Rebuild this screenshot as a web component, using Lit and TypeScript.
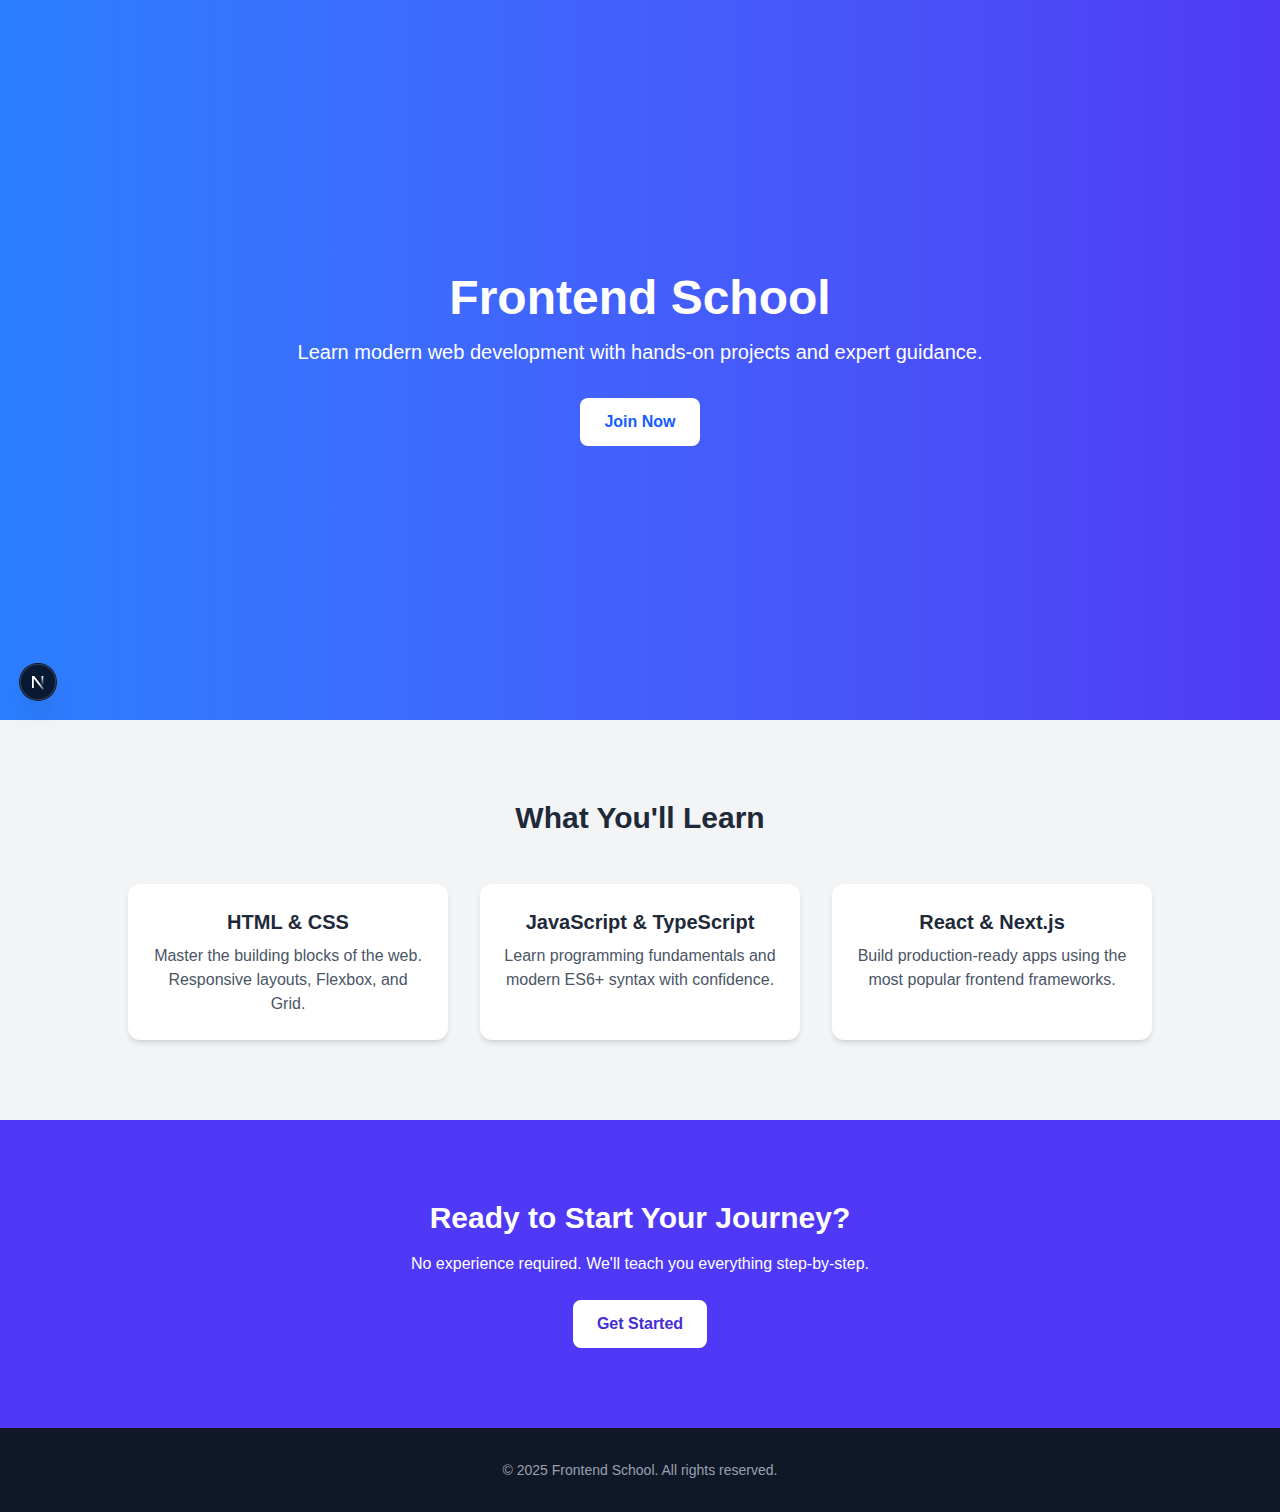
import { LitElement, html, css } from "lit";
import { customElement } from "lit/decorators.js";

interface Course {
  title: string;
  text: string;
}

const courses: Course[] = [
  {
    title: "HTML & CSS",
    text: "Master the building blocks of the web. Responsive layouts, Flexbox, and Grid.",
  },
  {
    title: "JavaScript & TypeScript",
    text: "Learn programming fundamentals and modern ES6+ syntax with confidence.",
  },
  {
    title: "React & Next.js",
    text: "Build production-ready apps using the most popular frontend frameworks.",
  },
];

@customElement("dev-tools-badge")
export class DevToolsBadge extends LitElement {
  static styles = css`
    :host {
      display: block;
    }
    .badge {
      display: flex;
      align-items: center;
      justify-content: center;
      width: 36px;
      height: 36px;
      padding: 0;
      border: 0;
      border-radius: 50%;
      background: rgba(0, 0, 0, 0.8);
      box-shadow:
        0 0 0 1px #171717,
        inset 0 0 0 1px hsla(0, 0%, 100%, 0.14),
        0 16px 32px -8px rgba(0, 0, 0, 0.24);
      backdrop-filter: blur(48px);
      cursor: pointer;
    }
    .mark {
      display: block;
      width: 40px;
      height: 40px;
      flex: none;
    }
  `;

  render() {
    return html`
      <button class="badge" aria-label="Open Next.js Dev Tools">
        <svg class="mark" width="40" height="40" viewBox="0 0 40 40" fill="none" aria-hidden="true">
          <defs>
            <linearGradient id="diagonal" x1="20.5" y1="22" x2="25.9" y2="28.7" gradientUnits="userSpaceOnUse">
              <stop stop-color="#fff" />
              <stop offset="1" stop-color="#fff" stop-opacity="0.15" />
            </linearGradient>
            <linearGradient id="stem" x1="24.3" y1="14" x2="24.3" y2="23.5" gradientUnits="userSpaceOnUse">
              <stop stop-color="#fff" />
              <stop offset="1" stop-color="#fff" stop-opacity="0" />
            </linearGradient>
          </defs>
          <path d="M14 14 H16.2 L26 26.7 L24.5 27.8 L15.8 16.6 V26 H14 Z" fill="url(#diagonal)" />
          <path d="M23.5 14 H25.3 V24 H23.5 Z" fill="url(#stem)" />
        </svg>
      </button>
    `;
  }
}

@customElement("app-root")
export class AppRoot extends LitElement {
  static styles = css`
    :host {
      display: block;
      background: #ffffff;
      font-family: "Liberation Sans", Arial, Helvetica, sans-serif;
      font-size: 16px;
      line-height: 24px;
      text-align: center;
    }
    h1,
    h2,
    h3,
    p {
      margin: 0;
    }
    .hero {
      position: relative;
      display: flex;
      flex-direction: column;
      align-items: center;
      justify-content: center;
      box-sizing: border-box;
      min-height: 720px;
      padding: 24px;
      color: #ffffff;
      background: linear-gradient(to right in oklab, #2b7fff, #4f39f6);
    }
    .hero-title {
      margin-bottom: 16px;
      font-size: 48px;
      line-height: 48px;
    }
    .hero-text {
      margin-bottom: 32px;
      font-size: 20px;
      line-height: 28px;
    }
    .button {
      display: inline-block;
      padding: 12px 24px;
      border-radius: 8px;
      background: #ffffff;
      font-weight: 600;
      text-decoration: none;
    }
    .button-blue {
      color: #155dfc;
    }
    .button-indigo {
      color: #432dd7;
    }
    .tools {
      position: absolute;
      left: 20px;
      bottom: 20px;
    }
    .learn {
      padding: 80px 24px;
      background: #f3f4f6;
      color: #1e2939;
    }
    .section-title {
      font-size: 30px;
      line-height: 36px;
    }
    .cards {
      display: grid;
      grid-template-columns: repeat(auto-fit, minmax(240px, 1fr));
      gap: 32px;
      max-width: 1024px;
      margin: 48px auto 0;
    }
    .card {
      padding: 24px;
      border-radius: 12px;
      background: #ffffff;
      box-shadow:
        0 4px 6px -1px rgba(0, 0, 0, 0.1),
        0 2px 4px -2px rgba(0, 0, 0, 0.1);
    }
    .card-title {
      margin-bottom: 8px;
      font-size: 20px;
      line-height: 28px;
    }
    .card-text {
      color: #4a5565;
    }
    .start {
      padding: 80px 24px;
      background: #4f39f6;
      color: #ffffff;
    }
    .start-text {
      margin: 16px 0 24px;
    }
    .footer {
      padding: 32px 24px;
      background: #101828;
      color: #99a1af;
      font-size: 14px;
      line-height: 20px;
    }
  `;

  render() {
    return html`
      <main>
        <section class="hero">
          <h1 class="hero-title">Frontend School</h1>
          <p class="hero-text">Learn modern web development with hands-on projects and expert guidance.</p>
          <a class="button button-blue" href="#start">Join Now</a>
          <dev-tools-badge class="tools"></dev-tools-badge>
        </section>
        <section class="learn">
          <h2 class="section-title">What You'll Learn</h2>
          <div class="cards">
            ${courses.map(
              (course) => html`
                <article class="card">
                  <h3 class="card-title">${course.title}</h3>
                  <p class="card-text">${course.text}</p>
                </article>
              `,
            )}
          </div>
        </section>
        <section class="start" id="start">
          <h2 class="section-title">Ready to Start Your Journey?</h2>
          <p class="start-text">No experience required. We'll teach you everything step-by-step.</p>
          <a class="button button-indigo" href="#start">Get Started</a>
        </section>
      </main>
      <footer class="footer">
        <p>© 2025 Frontend School. All rights reserved.</p>
      </footer>
    `;
  }
}
